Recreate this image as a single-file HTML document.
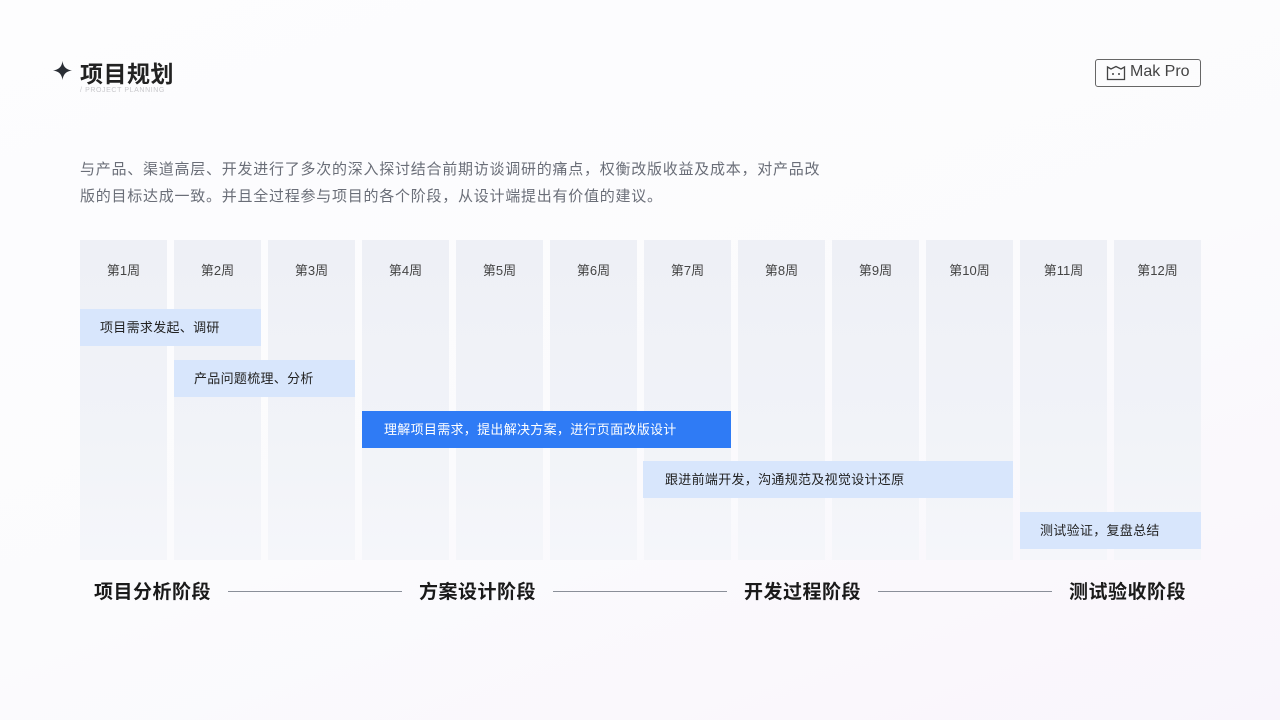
<!DOCTYPE html>
<html><head><meta charset="utf-8"><style>
*{margin:0;padding:0;box-sizing:border-box}
body{width:1280px;height:720px;overflow:hidden;position:relative;font-family:"Liberation Sans","Noto Sans CJK SC",sans-serif;background:linear-gradient(160deg,#fdfdfe 0%,#fbfbfd 55%,#f9f5fc 100%)}
.abs{position:absolute}
.col{position:absolute;top:240px;width:87px;height:320px;background:linear-gradient(180deg,#eef0f6 0%,#f1f3f8 60%,#f5f6fa 100%)}
.col span{position:absolute;top:20px;left:0;right:0;text-align:center;font-size:13px;color:#444}
.bar{position:absolute;height:37px;background:#d8e6fc;font-size:13px;color:#222;line-height:37px;padding-left:20px;letter-spacing:0.3px}
.ph{position:absolute;top:577px;font-size:19px;font-weight:bold;color:#1a1a1a;letter-spacing:0.5px}
.ln{position:absolute;top:591px;height:1px;background:#8a8f99}
</style></head><body>
<svg class="abs" style="left:53px;top:61px" width="19" height="19" viewBox="0 0 20 20"><path d="M10 0 Q11 9 20 10 Q11 11 10 20 Q9 11 0 10 Q9 9 10 0Z" fill="#2a2e35"/></svg>
<div class="abs" style="left:80px;top:55px;font-size:23px;font-weight:bold;color:#222;letter-spacing:0.5px">项目规划</div>
<div class="abs" style="left:80px;top:87px;font-size:7px;color:#c8c8cc;letter-spacing:0.6px">/ PROJECT PLANNING</div>
<div class="abs" style="left:1095px;top:59px;width:106px;height:28px;border:1px solid #666;border-radius:3px"></div>
<svg class="abs" style="left:1106px;top:65px" width="20" height="16" viewBox="0 0 20 16"><path d="M1.5 2 L5 4 L10 1.5 L15 4 L18.5 2 V14.5 H1.5Z" fill="none" stroke="#444" stroke-width="1.3"/><circle cx="7" cy="9" r="1" fill="#444"/><circle cx="13" cy="9" r="1" fill="#444"/></svg>
<div class="abs" style="left:1130px;top:63px;font-size:16px;color:#444">Mak Pro</div>
<div class="abs" style="left:80px;top:156px;font-size:15px;line-height:27px;color:#6a6e78;width:800px;letter-spacing:0.75px">与产品、渠道高层、开发进行了多次的深入探讨结合前期访谈调研的痛点，权衡改版收益及成本，对产品改<br>版的目标达成一致。并且全过程参与项目的各个阶段，从设计端提出有价值的建议。</div>
<div class="col" style="left:80px"><span>第1周</span></div>
<div class="col" style="left:174px"><span>第2周</span></div>
<div class="col" style="left:268px"><span>第3周</span></div>
<div class="col" style="left:362px"><span>第4周</span></div>
<div class="col" style="left:456px"><span>第5周</span></div>
<div class="col" style="left:550px"><span>第6周</span></div>
<div class="col" style="left:644px"><span>第7周</span></div>
<div class="col" style="left:738px"><span>第8周</span></div>
<div class="col" style="left:832px"><span>第9周</span></div>
<div class="col" style="left:926px"><span>第10周</span></div>
<div class="col" style="left:1020px"><span>第11周</span></div>
<div class="col" style="left:1114px"><span>第12周</span></div>
<div class="bar" style="left:80px;top:309px;width:181px">项目需求发起、调研</div>
<div class="bar" style="left:174px;top:360px;width:181px">产品问题梳理、分析</div>
<div class="bar" style="left:362px;top:411px;width:369px;background:#2f7bf5;color:#fff;padding-left:22px">理解项目需求，提出解决方案，进行页面改版设计</div>
<div class="bar" style="left:643px;top:461px;width:370px;padding-left:22px">跟进前端开发，沟通规范及视觉设计还原</div>
<div class="bar" style="left:1020px;top:512px;width:181px">测试验证，复盘总结</div>
<div class="ph" style="left:94px">项目分析阶段</div>
<div class="ln" style="left:228px;width:174px"></div>
<div class="ph" style="left:419px">方案设计阶段</div>
<div class="ln" style="left:553px;width:174px"></div>
<div class="ph" style="left:744px">开发过程阶段</div>
<div class="ln" style="left:878px;width:174px"></div>
<div class="ph" style="left:1069px">测试验收阶段</div>
</body></html>
